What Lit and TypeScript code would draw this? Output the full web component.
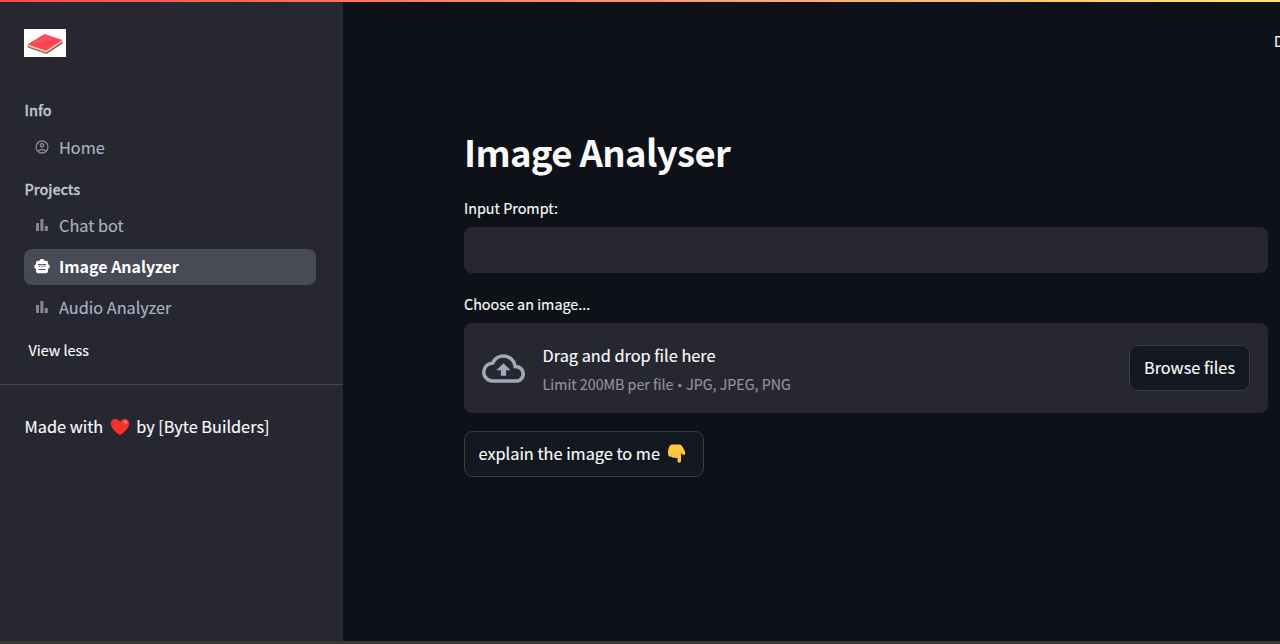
import { LitElement, html, css, svg } from "lit";
import { customElement } from "lit/decorators.js";

const barsIcon = svg`<svg class="icon bars" viewBox="0 0 12 12"><path d="M0 4h3v8H0zM4.4 0h3v12h-3zM8.800 7h3v5h-3z"/></svg>`;

const personIcon = svg`<svg class="icon" viewBox="0 0 24 24"><path d="M12 2a10 10 0 1 0 0 20 10 10 0 0 0 0-20zM7.35 18.5C8.66 17.56 10.26 17 12 17s3.34.56 4.65 1.5A7.97 7.97 0 0 1 12 20a7.97 7.97 0 0 1-4.65-1.5zm10.79-1.38A9.95 9.95 0 0 0 12 15c-2.32 0-4.45.79-6.14 2.12A7.96 7.96 0 0 1 4 12a8 8 0 1 1 14.14 5.12zM12 6a3.5 3.5 0 1 0 0 7 3.5 3.5 0 0 0 0-7zm0 5a1.5 1.5 0 1 1 0-3 1.5 1.5 0 0 1 0 3z"/></svg>`;

const robotIcon = svg`<svg class="icon robot" viewBox="0 0 16 15"><path fill="#fff" d="M5.500 1.700a2.600 2.600 0 0 1 5 0H12c1.100 0 2 .9 2 2v1.500a2.500 2.500 0 0 1 0 4.800v2.200c0 1.100-.9 2-2 2H4c-1.100 0-2-.9-2-2V10a2.500 2.500 0 0 1 0-4.800V3.700c0-1.100.9-2 2-2z"/><path fill="#484a55" d="M4 4.900h3.500v1H4zM8.500 4.900H12v1H8.500zM4.600 6.700h1.700v1.100H4.600zM9.700 6.700h1.700v1.100H9.700zM7.600 5.500h.8v3h-.8zM4.500 9.900h7v1.200h-7z"/></svg>`;

const cloudIcon = svg`<svg class="cloud" viewBox="0 0 24 16"><path d="M19.350 6.040A7.490 7.490 0 0 0 12 0C9.110 0 6.600 1.640 5.350 4.040A5.994 5.994 0 0 0 0 10c0 3.310 2.690 6 6 6h13c2.760 0 5-2.240 5-5 0-2.640-2.050-4.780-4.650-4.960zM19 14H6c-2.210 0-4-1.790-4-4 0-2.050 1.530-3.760 3.560-3.970l1.070-.11.500-.95A5.469 5.469 0 0 1 12 2c2.620 0 4.880 1.860 5.390 4.430l.3 1.500 1.530.11A2.980 2.980 0 0 1 22 11c0 1.650-1.350 3-3 3zM8 9h2.550v3h2.900V9H16l-4-4z"/></svg>`;

const bookLogo = svg`<svg class="logo" viewBox="0 0 42 28"><rect width="42" height="28" fill="#fff"/><path fill="#8f4a45" d="M3.500 16.200 22 23.500 38.500 12v2.600L22.500 25 4 18.600z"/><path fill="#d9c4a0" d="M4.500 16.300 22 21.700 37.500 11.600v1.800L22.500 23.600 5 18z"/><path fill="#fb4454" d="M3.300 15.600 20.500 5 38.500 11 22 21.800z"/><path fill="#ff6b73" d="M9 14.500 20.800 6.500 30 9.300 15 14z" opacity=".35"/></svg>`;

const heart = svg`<svg class="heart" viewBox="0 0 20 18"><path fill="#f8312f" d="M10 17.300C6.500 15 .8 10.500.8 5.800.8 3 2.800 1 5.300 1 7.300 1 9.200 2.200 10 4c.8-1.800 2.700-3 4.700-3 2.500 0 4.500 2 4.500 4.800 0 4.700-5.700 9.200-9.200 11.500z"/><ellipse cx="15.500" cy="4.300" rx="2.200" ry="1.500" fill="#ff7a78" transform="rotate(35 15.500 4.300)"/></svg>`;

const hand = svg`<svg class="hand" viewBox="0 0 18 19"><path fill="#ffc83d" d="M5 .4h6.500c2.300 0 3.300 1.600 4.200 3.700.7 1.700 2 3.300 2.100 5 .1 1.700-1.700 2.300-2.800 1.300L13.500 9v8a1.750 1.750 0 0 1-3.500 0v-3.500c-.7.7-2.300.8-3-.1-.9.700-2.500.5-3-.6-1.700.2-3.200-.8-3.400-2.400C.3 7 .9 4.500 2.100 2.100 2.700.9 3.700.4 5 .4z"/><path fill="none" stroke="#e8a723" stroke-width=".5" d="M4 12.500V9.800M7 13.200V9.800M10 13.500V9.500M13.500 9V7.500"/></svg>`;

@customElement("app-root")
export class AppRoot extends LitElement {
  static styles = css`
    :host {
      display: flex;
      flex-direction: column;
      height: 644px;
      overflow: hidden;
      background: #0e1117;
      color: #fafafa;
      font-family: "Source Sans Pro", "Noto Sans CJK SC", sans-serif;
      font-size: 16.300px;
      line-height: 24px;
      white-space: nowrap;
      -webkit-text-stroke: 0.150px currentColor;
    }
    * { box-sizing: border-box; }
    svg { display: block; flex: none; }
    h1, p { margin: 0; }
    .decoration { height: 2px; flex: none; background: linear-gradient(90deg, #ff4b4b, #ffe671); }
    .body { flex: 1; display: flex; min-height: 0; }
    .edge { height: 3px; flex: none; background: #363636; }
    .sidebar { width: 343px; flex: none; background: #262730; padding-top: 27px; }
    .logo { width: 42px; height: 28px; margin-left: 24px; }
    .nav { padding: 41px 27px 0 24px; border-bottom: 1px solid #464750; height: 328px; }
    .group { height: 24px; padding-left: 0.500px; font-size: 14.350px; font-weight: 500; color: #bfc5d3; -webkit-text-stroke-width: 0.300px; }
    .group.second { margin-top: 12px; }
    .link { display: flex; align-items: center; height: 36px; margin-top: 5px; padding: 0 0 2px 10px; border-radius: 8px; color: #a9b2c3; }
    .link.first { margin-top: 7px; padding-bottom: 0; }
    .link.active { background: #484a55; color: #fff; font-weight: 700; font-size: 15.950px; -webkit-text-stroke-width: 0; }
    .link.chat { margin-top: 7px; }
    .icon { width: 16px; height: 16px; margin-right: 9px; fill: #858894; }
    .bars { width: 12px; height: 12px; margin: 0 11px 0 2px; }
    .robot { height: 15px; }
    .name { margin-top: -1px; }
    .more { padding: 12px 0 0 4.500px; font-size: 14.350px; }
    .footer { display: flex; align-items: center; padding: 29px 0 0 24.500px; }
    .heart { width: 20px; height: 18px; margin: 1px 6px 0 7px; }
    .main { flex: 1; min-width: 0; position: relative; padding: 124px 12px 0 121px; }
    .deploy { position: absolute; top: 27px; left: 931px; font-size: 14px; }
    .title { font-size: 36.500px; line-height: 52px; font-weight: 700; letter-spacing: -0.650px; -webkit-text-stroke-width: 0; }
    .label { font-size: 14.350px; height: 24px; }
    .label.prompt { margin-top: 18px; }
    .input { height: 46px; margin-top: 7px; border-radius: 8px; background: #262730; }
    .label.file { margin-top: 19px; }
    .drop { display: flex; align-items: center; height: 90px; margin-top: 7px; padding: 0 18px; border-radius: 8px; background: #262730; }
    .cloud { width: 43px; height: 29px; fill: #a3a8b8; margin-right: 17.600px; }
    .hint { flex: 1; padding-top: 4px; }
    .limit { margin-top: 5px; font-size: 14.220px; color: #92939b; }
    .dot { font-family: "Open Sans", sans-serif; font-size: 12px; margin: 0 1px; -webkit-text-stroke-width: 0.500px; }
    .button { display: flex; align-items: center; justify-content: center; height: 46px; width: 121px; padding-bottom: 2px; border: 1px solid #3a3c45; border-radius: 9px; background: #131720; }
    .explain { width: 240px; margin-top: 18px; justify-content: flex-start; padding-left: 13.500px; }
    .hand { width: 19px; height: 19px; margin-left: 7px; }
  `;

  render() {
    return html`
      <div class="decoration"></div>
      <div class="body">
        <aside class="sidebar">
          ${bookLogo}
          <nav class="nav">
            <div class="group">Info</div>
            <div class="link first">${personIcon}<span class="name">Home</span></div>
            <div class="group second">Projects</div>
            <div class="link chat">${barsIcon}<span class="name">Chat bot</span></div>
            <div class="link active">${robotIcon}<span class="name">Image Analyzer</span></div>
            <div class="link">${barsIcon}<span class="name">Audio Analyzer</span></div>
            <div class="more">View less</div>
          </nav>
          <div class="footer"><span>Made with</span>${heart}<span>by [Byte Builders]</span></div>
        </aside>
        <main class="main">
          <div class="deploy">Deploy</div>
          <h1 class="title">Image Analyser</h1>
          <div class="label prompt">Input Prompt:</div>
          <div class="input"></div>
          <div class="label file">Choose an image...</div>
          <div class="drop">
            ${cloudIcon}
            <div class="hint">
              <p>Drag and drop file here</p>
              <p class="limit">Limit 200MB per file<span class="dot"> • </span>JPG, JPEG, PNG</p>
            </div>
            <div class="button">Browse files</div>
          </div>
          <div class="button explain"><span>explain the image to me</span>${hand}</div>
        </main>
      </div>
      <div class="edge"></div>
    `;
  }
}
